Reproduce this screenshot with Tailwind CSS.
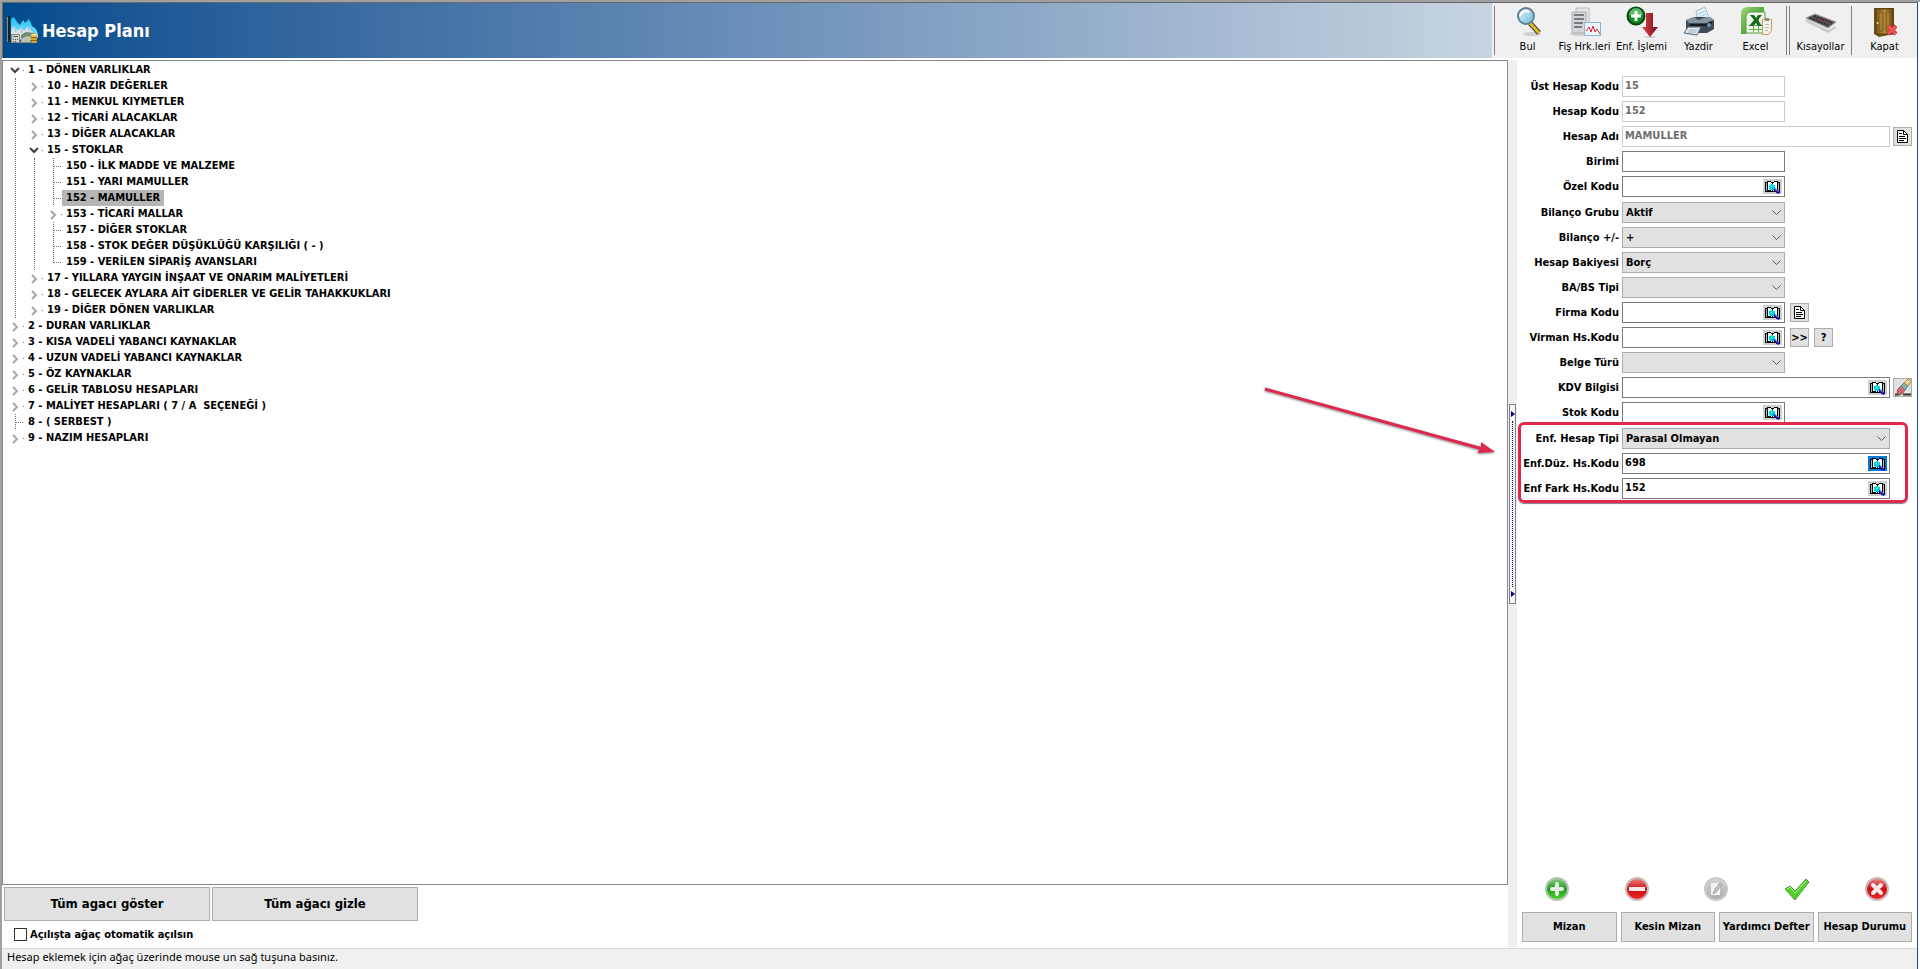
<!DOCTYPE html>
<html lang="tr">
<head>
    <meta charset="UTF-8">
    <meta name="viewport" content="width=device-width, initial-scale=1.0">
    <title>Hesap Planı</title>
    <script src="https://cdn.jsdelivr.net/npm/@tailwindcss/browser@4"></script>
</head>
<body class="font-['DejaVu_Sans_Condensed','DejaVu_Sans',sans-serif] text-[11px] leading-4 text-black bg-white">

<!-- Shared icons -->
<svg class="absolute size-0" aria-hidden="true">
    <defs>
        <linearGradient id="gGreen" x1="0" y1="0" x2="0" y2="1"><stop offset="0" stop-color="#8fd08a"/><stop offset=".5" stop-color="#1f9a1f"/><stop offset="1" stop-color="#4fd82c"/></linearGradient>
        <linearGradient id="gRed" x1="0" y1="0" x2="0" y2="1"><stop offset="0" stop-color="#e88a8a"/><stop offset=".5" stop-color="#cf0d12"/><stop offset="1" stop-color="#f0282a"/></linearGradient>
        <linearGradient id="gGray" x1="0" y1="0" x2="0" y2="1"><stop offset="0" stop-color="#d8d8d8"/><stop offset="1" stop-color="#a9a9a9"/></linearGradient>
        <linearGradient id="gDoor" x1="0" y1="0" x2="1" y2="0"><stop offset="0" stop-color="#7a5a1c"/><stop offset=".5" stop-color="#b98f3e"/><stop offset="1" stop-color="#6b4c14"/></linearGradient>
        <linearGradient id="gLens" x1="0" y1="0" x2="1" y2="1"><stop offset="0" stop-color="#e4f6ff"/><stop offset="1" stop-color="#6db7de"/></linearGradient>
        <linearGradient id="gArrow" x1="0" y1="0" x2="1" y2="0"><stop offset="0" stop-color="#d8434c"/><stop offset="1" stop-color="#7c0a14"/></linearGradient>
        <linearGradient id="gXls" x1="0" y1="0" x2="1" y2="1"><stop offset="0" stop-color="#9bd871"/><stop offset="1" stop-color="#1d7d1a"/></linearGradient>
        <linearGradient id="gPeak" x1="0" y1="0" x2="0" y2="1"><stop offset="0" stop-color="#16c3f7"/><stop offset="1" stop-color="#8fe0fb"/></linearGradient>
        <symbol id="lookup" viewBox="0 0 19 15">
            <path d="M2 3h2V2h4v1h3V2h4v1h2v11h-4v-1H2z" fill="#000"/>
            <path d="M5 3h3v1h1v8H8v-1H5zM10 4h1V3h3v8h-3v1h-1z" fill="#fff"/>
            <path d="M3.500 4v8M15.500 4v8" stroke="#b8b8b8"/>
            <path d="M7 5h4v1h1v4h-1v1H7v-1H6V6h1z" fill="#00d8e0"/>
            <path d="M7 5h1v1H7zM10 5h1v1h-1zM8 7h1v1H8z" fill="#e6ffff"/>
            <path d="M11 9.500l5 5" stroke="#1414d8" stroke-width="2"/><path d="M12 9.500l3 3" stroke="#8f9cf0"/>
        </symbol>
        <symbol id="doc" viewBox="0 0 11 13">
            <path d="M.5.5h6l4 4v8H.5z" fill="#fff" stroke="#000"/>
            <path d="M6.500.5v4h4M2 3.500h3M2 6.500h6M2 8.500h7M2 10.500h5" fill="none" stroke="#000"/>
        </symbol>
        <symbol id="caret" viewBox="0 0 9 5">
            <path d="M.5.5l4 4 4-4" fill="none" stroke="#5a5a5a"/>
        </symbol>
    </defs>
</svg>

<div class="min-h-screen flex flex-col border-t-2 border-l-2 border-[#a0a0a0]">
<div class="flex-1 flex flex-col border-t border-t-[#696969] border-r border-r-[#1c449b] mr-[2px]">

    <!-- Title bar and toolbar -->
    <header class="flex h-[55px] bg-[#f0f0f0]">
        <div class="flex-1 flex items-center gap-1 pl-1 border-l border-[#696969] bg-linear-to-r from-[#004b8d] to-[#c8d4e0]">
            <svg class="size-[31px]" viewBox="0 0 31 31">
                <path d="M4 20V4l3-2 3 5 3 3 3-5 2 3 4-4 3 7 4 3 2 5v4z" fill="url(#gPeak)"/>
                <path d="M4 24V15l3-4 4 5 3-4 3 4 4-5 3 5 4 3v6z" fill="#d9e1e6"/>
                <path d="M7 11l2 6M14 12l1 6M21 11l1 5" stroke="#a9b8c0"/>
                <path d="M2 1v26" stroke="#202020" stroke-width="2"/><path d="M.5 2v25M4 27.500h20" stroke="#8c8c8c"/>
                <rect x="4.500" y="19.500" width="8" height="8" fill="#d3d3cc" stroke="#8b8b83"/>
                <path d="M6 21.500h5M6 24.500h1M8 24.500h1M10 24.500h1M6 26.500h1M8 26.500h1" stroke="#555"/>
                <path d="M14 20l5-3 9 1-4 6-10 2z" fill="#6f8a76"/><path d="M14 24l6-3 5 1-2 5h-9z" fill="#b8c4b4"/>
                <rect x="24" y="20" width="6" height="8" rx="1" fill="#d9a520"/><path d="M24 22.500h6M24 25.500h6" stroke="#8a6208"/><ellipse cx="27" cy="20" rx="3" ry="1.500" fill="#f7d56a"/>
            </svg>
            <h1 class="text-[18px] leading-6 font-bold text-white">Hesap Planı</h1>
        </div>
        <nav class="w-[425px] flex items-start pt-[3px]">
            <span class="w-px h-[49px] ml-[2px] bg-[#808080]"></span>
            <div class="flex-1 flex pl-1">
                <button type="button" class="w-[57px] flex flex-col items-center">
                    <svg class="w-8 h-[33px]" viewBox="0 0 32 33">
                        <ellipse cx="20" cy="28" rx="9" ry="2" fill="#cfcfcf"/>
                        <path d="M18 17l9 10" stroke="#3a3a3a" stroke-width="5"/><path d="M18 17l9 10" stroke="#e5bd22" stroke-width="3"/>
                        <circle cx="14" cy="10" r="8" fill="url(#gLens)" stroke="#64808f" stroke-width="2"/>
                        <path d="M8 10a6 6 0 0 1 9-4" fill="none" stroke="#fff" stroke-width="2"/>
                    </svg>
                    <span>Bul</span>
                </button>
                <button type="button" class="w-[57px] flex flex-col items-center whitespace-nowrap">
                    <svg class="w-8 h-[33px]" viewBox="0 0 32 33">
                        <ellipse cx="14" cy="28" rx="13" ry="2" fill="#cfcfcf"/>
                        <path d="M7 2h13v22H7z" fill="#e3e7ea" stroke="#b9bec2"/>
                        <path d="M3 6h14v21H3z" fill="#d3d7da" stroke="#a8adb1"/>
                        <path d="M5 9h10M5 13h10M5 17h9M5 21h8" stroke="#767c81" stroke-width="2"/>
                        <rect x="15.500" y="16.500" width="16" height="13" fill="#eef6fd" stroke="#8fb4d6"/>
                        <path d="M17 25l3-4 2 5 2-6 2 6 2-3 3 5" fill="none" stroke="#d5222a"/>
                    </svg>
                    <span>Fiş Hrk.leri</span>
                </button>
                <button type="button" class="w-[57px] flex flex-col items-center whitespace-nowrap">
                    <svg class="w-8 h-[33px]" viewBox="0 0 32 33">
                        <ellipse cx="24" cy="31" rx="6" ry="1" fill="#cfcfcf"/>
                        <path d="M20 7h7v14h5l-8 10-8-10h4z" fill="url(#gArrow)"/>
                        <circle cx="10" cy="10" r="8.500" fill="#128a24" stroke="#07450f" stroke-width="2"/>
                        <path d="M3 9a7 7 0 0 1 14 0z" fill="#8fdc92" opacity=".6"/>
                        <path d="M10 5v10M5 10h10" stroke="#fff" stroke-width="3"/>
                    </svg>
                    <span>Enf. İşlemi</span>
                </button>
                <button type="button" class="w-[57px] flex flex-col items-center">
                    <svg class="w-8 h-[33px]" viewBox="0 0 32 33">
                        <path d="M13 5l9-4 4 11-11 4z" fill="#e3eff7" stroke="#a9bccb"/><path d="M15 8l7-3M16 11l7-3" stroke="#a4c8e4"/>
                        <path d="M3 14l8-3h16l4 3v9l-7 4H6l-3-4z" fill="#3e4b58"/>
                        <path d="M3 14l8-3 4 3 9-3h3l4 3-7 3H6z" fill="#8594a2"/>
                        <path d="M7 19h16l6-3" stroke="#161c22" stroke-width="2" fill="none"/>
                        <circle cx="26" cy="19" r="2" fill="#6d93b8"/>
                        <path d="M5 21h13l-4 8-13-2z" fill="#dfe9f1" stroke="#53606c"/>
                        <path d="M6 24h8M5 26h8" stroke="#9fb3c3"/>
                    </svg>
                    <span>Yazdir</span>
                </button>
                <button type="button" class="w-[57px] flex flex-col items-center">
                    <svg class="w-8 h-[33px]" viewBox="0 0 32 33">
                        <path d="M1 8q0-7 7-7h16v5H11q-5 0-5 5v17H1z" fill="url(#gXls)"/>
                        <path d="M6 11q0-5 5-5h14v21H6z" fill="#eef6e9" stroke="#55a03f"/>
                        <path d="M9 19.500h14M9 23.500h14M13.500 19v7M18.500 9v17" stroke="#5fae49"/>
                        <path d="M10 9h4l2 3 2-3h4l-4 5 4 6h-4l-2-3-3 3H9l5-6z" fill="#176b1c"/>
                        <path d="M22.500 13.500h9v11l-3 4h-6z" fill="#f3f3f6" stroke="#d39a38"/><path d="M25 12h4v3h-4z" fill="#8a8a8a"/>
                        <path d="M25 18.500h4M25 21.500h4M25 24.500h3" stroke="#b4b9c6"/>
                    </svg>
                    <span>Excel</span>
                </button>
            </div>
            <span class="w-[4px] h-[49px] border-x border-[#808080]"></span>
            <button type="button" class="w-[61px] flex flex-col items-center">
                <svg class="w-8 h-[33px]" viewBox="0 0 32 33">
                    <path d="M1 13l22 11 8-4v2l-8 5L1 16z" fill="#cacaca"/>
                    <path d="M1 12l9-4 21 8-8 6z" fill="#5a5a5c" stroke="#9b9b9d"/>
                    <path d="M5 12l18 7M9 10l18 7" stroke="#2b2b2d" stroke-width="2" stroke-dasharray="2 1"/><path d="M13 13l4 2M19 15l3 1" stroke="#a33a35"/>
                </svg>
                <span>Kısayollar</span>
            </button>
            <span class="w-px h-[49px] bg-[#808080]"></span>
            <button type="button" class="w-[65px] flex flex-col items-center">
                <svg class="w-8 h-[33px]" viewBox="0 0 32 33">
                    <path d="M5 2h20v26l-15 3-5-3z" fill="#6f5017"/>
                    <path d="M7 3h17v25H7z" fill="url(#gDoor)" stroke="#57400f"/>
                    <path d="M10 6h4v19h-4zM17 6h4v19h-4z" fill="#a87e31" stroke="#75561c"/>
                    <circle cx="8.500" cy="17" r="1" fill="#f4e29a"/>
                    <path d="M19 20l8 8M27 20l-8 8" stroke="#b3262b" stroke-width="4"/><path d="M19 20l8 8M27 20l-8 8" stroke="#f0545a" stroke-width="3"/>
                </svg>
                <span>Kapat</span>
            </button>
        </nav>
    </header>

    <main class="flex-1 flex pt-[2px]">
        <!-- Account tree -->
        <section class="flex-1 flex flex-col">
            <div class="relative flex-1 border border-[#828790] pt-px pl-px font-bold">
                <ul id="tree" role="tree"></ul>
                <svg class="absolute top-[323px] right-2 w-[240px] h-[76px] drop-shadow-[0_1px_1px_rgba(0,0,0,0.5)]" viewBox="0 0 240 76">
                    <path d="M6 5l218 60" stroke="#e0284e" stroke-width="3"/>
                    <path d="M222 58l14 10-18 1 4-5z" fill="#e0284e"/>
                </svg>
            </div>
            <div class="flex gap-[2px] pt-[2px] pl-[2px] font-bold text-[13px]">
                <button type="button" class="w-[206px] h-[34px] border border-[#adadad] bg-[#e1e1e1]">Tüm agacı göster</button>
                <button type="button" class="w-[206px] h-[34px] border border-[#adadad] bg-[#e1e1e1]">Tüm ağacı gizle</button>
            </div>
            <label class="flex items-center gap-[3px] h-[27px] pl-3 font-bold">
                <input type="checkbox" class="appearance-none size-[13px] border border-[#333] bg-white">
                Açılışta ağaç otomatik açılsın
            </label>
        </section>

        <!-- Splitter -->
        <div class="w-[9px] flex flex-col items-center justify-center bg-[#f0f0f0]">
            <div class="w-[7px] h-[200px] flex flex-col items-end justify-between py-[6px] border border-[#808080] bg-[#f4f4f4]">
                <svg class="w-[4px] h-[6px]" viewBox="0 0 4 6"><path d="M0 0l4 3-4 3z" fill="#000080"/></svg>
                <span class="flex-1 my-1 mr-[2px] border-l border-dotted border-[#000080]"></span>
                <svg class="w-[4px] h-[6px]" viewBox="0 0 4 6"><path d="M0 0l4 3-4 3z" fill="#000080"/></svg>
            </div>
        </div>

        <!-- Account details -->
        <section class="w-[400px] flex flex-col justify-between font-bold">
            <form id="form" class="flex flex-col gap-[5px] pt-4"></form>
            <div class="px-[5px] pb-[6px]">
                <div class="flex justify-between px-[23px] mb-[11px]">
                    <button type="button" aria-label="Ekle">
                        <svg class="size-6" viewBox="0 0 24 24"><circle cx="12" cy="12" r="11" fill="url(#gGreen)" stroke="#b5c4b5" stroke-width="2"/><path d="M12 7v10M7 12h10" stroke="#e6eee6" stroke-width="4" stroke-linecap="round"/></svg>
                    </button>
                    <button type="button" aria-label="Sil">
                        <svg class="size-6" viewBox="0 0 24 24"><circle cx="12" cy="12" r="11" fill="url(#gRed)" stroke="#cbb9b9" stroke-width="2"/><path d="M4 12h16" stroke="#f6eaea" stroke-width="4"/></svg>
                    </button>
                    <button type="button" aria-label="Düzenle" disabled>
                        <svg class="size-6" viewBox="0 0 24 24"><circle cx="12" cy="12" r="11" fill="url(#gGray)" stroke="#c9c9c9" stroke-width="2"/><path d="M7 6h9v12H7z" fill="#f2f2f2"/><path d="M9 17l2-5 5-6 2 2-6 7z" fill="#c5c5c5" stroke="#a0a0a0"/></svg>
                    </button>
                    <button type="button" aria-label="Kaydet">
                        <svg class="w-[26px] h-6" viewBox="0 0 26 24"><path d="M1 12l5-3 5 5L22 2l3 3-14 18z" fill="#52cf28" stroke="#4d9a40"/><path d="M3 12l3-2 5 6L22 4" fill="none" stroke="#b5f29a"/></svg>
                    </button>
                    <button type="button" aria-label="İptal">
                        <svg class="size-6" viewBox="0 0 24 24"><circle cx="12" cy="12" r="11" fill="url(#gRed)" stroke="#cbb9b9" stroke-width="2"/><path d="M8 8l8 8M16 8l-8 8" stroke="#f6eaea" stroke-width="4" stroke-linecap="round"/></svg>
                    </button>
                </div>
                <div class="grid grid-cols-4 gap-1">
                    <button type="button" class="h-[30px] whitespace-nowrap border border-[#adadad] bg-[#e1e1e1]">Mizan</button>
                    <button type="button" class="h-[30px] whitespace-nowrap border border-[#adadad] bg-[#e1e1e1]">Kesin Mizan</button>
                    <button type="button" class="h-[30px] whitespace-nowrap border border-[#adadad] bg-[#e1e1e1]">Yardımcı Defter</button>
                    <button type="button" class="h-[30px] whitespace-nowrap border border-[#adadad] bg-[#e1e1e1]">Hesap Durumu</button>
                </div>
            </div>
        </section>
    </main>

    <!-- Status bar -->
    <footer class="h-[21px] pl-[5px] border-t border-[#d7d7d7] bg-[#f0f0f0] font-['Noto_Sans',sans-serif]">Hesap eklemek için ağaç üzerinde mouse un sağ tuşuna basınız.</footer>
</div>
</div>

<script>
    // [title, children] : null = leaf, [] = collapsed
    const accounts = [
        ['1 - DÖNEN VARLIKLAR', [
            ['10 - HAZIR DEĞERLER', []],
            ['11 - MENKUL KIYMETLER', []],
            ['12 - TİCARİ ALACAKLAR', []],
            ['13 - DİĞER ALACAKLAR', []],
            ['15 - STOKLAR', [
                ['150 - İLK MADDE VE MALZEME', null],
                ['151 - YARI MAMULLER', null],
                ['152 - MAMULLER', null],
                ['153 - TİCARİ MALLAR', []],
                ['157 - DİĞER STOKLAR', null],
                ['158 - STOK DEĞER DÜŞÜKLÜĞÜ KARŞILIĞI ( - )', null],
                ['159 - VERİLEN SİPARİŞ AVANSLARI', null]
            ]],
            ['17 - YILLARA YAYGIN İNŞAAT VE ONARIM MALİYETLERİ', []],
            ['18 - GELECEK AYLARA AİT GİDERLER VE GELİR TAHAKKUKLARI', []],
            ['19 - DİĞER DÖNEN VARLIKLAR', []]
        ]],
        ['2 - DURAN VARLIKLAR', []],
        ['3 - KISA VADELİ YABANCI KAYNAKLAR', []],
        ['4 - UZUN VADELİ YABANCI KAYNAKLAR', []],
        ['5 - ÖZ KAYNAKLAR', []],
        ['6 - GELİR TABLOSU HESAPLARI', []],
        ['7 - MALİYET HESAPLARI ( 7 / A  SEÇENEĞİ )', []],
        ['8 - ( SERBEST )', null],
        ['9 - NAZIM HESAPLARI', []]
    ];
    const selected = '152 - MAMULLER';

    function nodeIcon(children, last) {
        if (children === null) {
            return `<path d="M11.500 0V${last ? 9 : 16}M12 8.500h8" stroke="#707070" stroke-dasharray="1 1"/>`;
        }
        const arrow = children.length
            ? '<path d="M7 6l4 4 4-4" fill="none" stroke="#404040" stroke-width="2"/>'
            : '<path d="M9 5l4 4-4 4" fill="none" stroke="#a6a6a6" stroke-width="2"/>';
        return arrow + '<path d="M19 8.500h1" stroke="#707070"/>';
    }

    function renderNodes(nodes) {
        return nodes.map(([title, children], i) => {
            const bg = title === selected ? 'bg-[#b5b5b5]' : '';
            return `<li role="treeitem">
                <div class="flex h-4">
                    <svg class="w-5 h-4" viewBox="0 0 20 16">${nodeIcon(children, i === nodes.length - 1)}</svg>
                    <span class="px-1 whitespace-pre ${bg}">${title}</span>
                </div>
                ${children && children.length ? `<ul role="group" class="ml-[11px] pl-[7px] border-l border-dotted border-[#707070]">${renderNodes(children)}</ul>` : ''}
            </li>`;
        }).join('');
    }
    document.getElementById('tree').innerHTML = renderNodes(accounts);

    // Detail form, split in the groups in which the rows are spaced
    const groups = [
        [
            { label: 'Üst Hesap Kodu', type: 'text', value: '15', disabled: true },
            { label: 'Hesap Kodu', type: 'text', value: '152', disabled: true },
            { label: 'Hesap Adı', type: 'text', value: 'MAMULLER', disabled: true, wide: true, buttons: ['doc'] },
            { label: 'Birimi', type: 'text' },
            { label: 'Özel Kodu', type: 'lookup' }
        ],
        [
            { label: 'Bilanço Grubu', type: 'select', value: 'Aktif' },
            { label: 'Bilanço +/-', type: 'select', value: '+' },
            { label: 'Hesap Bakiyesi', type: 'select', value: 'Borç' },
            { label: 'BA/BS Tipi', type: 'select' },
            { label: 'Firma Kodu', type: 'lookup', buttons: ['doc'] },
            { label: 'Virman Hs.Kodu', type: 'lookup', buttons: ['&gt;&gt;', '?'] },
            { label: 'Belge Türü', type: 'select' },
            { label: 'KDV Bilgisi', type: 'lookup', wide: true, buttons: ['eraser'] },
            { label: 'Stok Kodu', type: 'lookup' }
        ],
        [
            { label: 'Enf. Hesap Tipi', type: 'select', value: 'Parasal Olmayan', wide: true },
            { label: 'Enf.Düz. Hs.Kodu', type: 'lookup', value: '698', wide: true, active: true },
            { label: 'Enf Fark Hs.Kodu', type: 'lookup', value: '152', wide: true }
        ]
    ];

    const glyphs = {
        doc: '<svg class="w-[11px] h-[13px]"><use href="#doc"/></svg>',
        eraser: `<svg class="w-[17px] h-[17px]" viewBox="0 0 17 17">
            <path d="M1 15.500h4M9 15.500h8" stroke="#333" stroke-width="2"/>
            <path d="M4 10l3-3 4 4-3 4-3 1-2-3z" fill="#d9646a" stroke="#8a5a5e"/>
            <path d="M7 7l3-3 4 3-3 4z" fill="#7fb9a8" stroke="#5b7f8c"/>
            <path d="M10 4l4-4 3 1v2l-3 4z" fill="#f1d38b" stroke="#9f8a4c"/></svg>`
    };

    function renderControl(f, id) {
        const width = f.wide ? 'w-[268px]' : 'w-[163px]';
        const value = f.value || '';
        if (f.type === 'select') {
            return `<div class="grid items-center ${width}">
                <select id="${id}" class="col-start-1 row-start-1 appearance-none h-[21px] pl-[3px] border border-[#adadad] bg-[#e1e1e1]"><option>${value}</option></select>
                <svg class="col-start-1 row-start-1 justify-self-end mr-1 w-[9px] h-[5px] pointer-events-none"><use href="#caret"/></svg>
            </div>`;
        }
        const colors = f.disabled ? 'border-[#cccccc] text-[#6d6d6d]' : 'border-[#7a7a7a]';
        const lookupBg = f.active ? 'bg-[#0078d7]' : 'bg-[#cfcfcf]';
        const lookup = f.type === 'lookup'
            ? `<button type="button" aria-label="${f.label} ara" class="w-[19px] h-[15px] ${lookupBg}"><svg class="w-[19px] h-[15px]"><use href="#lookup"/></svg></button>` : '';
        return `<div class="flex items-center h-[21px] pr-[2px] border bg-white ${width} ${colors}">
            <input id="${id}" type="text" value="${value}" class="flex-1 min-w-0 pl-[2px] pb-px outline-none" ${f.disabled ? 'disabled' : ''}>${lookup}
        </div>`;
    }

    function renderRow(f, id) {
        const gap = f.wide ? 'gap-[3px]' : 'gap-[5px]';
        const buttons = (f.buttons || []).map(b =>
            `<button type="button" aria-label="${f.label} ${b}" class="size-[19px] flex items-center justify-center border border-[#adadad] bg-[#e1e1e1]">${glyphs[b] || b}</button>`
        ).join('');
        return `<div class="flex items-center gap-[3px]">
            <label for="${id}" class="w-[102px] text-right whitespace-nowrap">${f.label}</label>
            <div class="flex items-center ${gap}">${renderControl(f, id)}${buttons}</div>
        </div>`;
    }

    document.getElementById('form').innerHTML = groups.map((rows, g) => {
        const frame = g === 2
            ? '<div class="absolute -top-[6px] -bottom-1 left-px right-[9px] border-3 border-[#e0284e] rounded-md shadow-[0_1px_1px_rgba(0,0,0,0.5)] pointer-events-none"></div>' : '';
        return `<div class="relative flex flex-col gap-1">${rows.map((f, i) => renderRow(f, 'f' + g + i)).join('')}${frame}</div>`;
    }).join('');
</script>
</body>
</html>
